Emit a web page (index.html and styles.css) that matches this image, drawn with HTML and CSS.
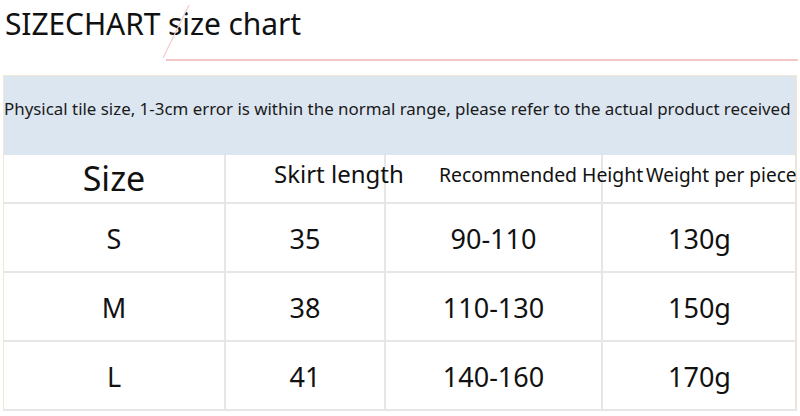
FILE: index.html
```html
<!DOCTYPE html>
<html>
<head>
<meta charset="utf-8">
<link rel="stylesheet" href="styles.css">
</head>
<body>
<div class="page">
  <header class="title-bar">
    <h1 class="title">SIZECHART size chart</h1>
    <svg class="deco" width="800" height="70" viewBox="0 0 800 70">
      <line x1="189" y1="5" x2="163" y2="58" stroke="#f3caca" stroke-width="1.2"/>
      <line x1="166" y1="60" x2="798" y2="60" stroke="#f3c6c6" stroke-width="2"/>
    </svg>
  </header>
  <div class="chart">
    <div class="note">Physical tile size, 1-3cm error is within the normal range, please refer to the actual product received</div>
    <div class="grid">
      <div class="cell head h-size">Size</div>
      <div class="cell head h-skirt">Skirt length</div>
      <div class="cell head h-rec">Recommended Height</div>
      <div class="cell head h-weight">Weight per piece</div>

      <div class="cell">S</div>
      <div class="cell">35</div>
      <div class="cell">90-110</div>
      <div class="cell">130g</div>

      <div class="cell">M</div>
      <div class="cell">38</div>
      <div class="cell">110-130</div>
      <div class="cell">150g</div>

      <div class="cell">L</div>
      <div class="cell">41</div>
      <div class="cell">140-160</div>
      <div class="cell">170g</div>
    </div>
  </div>
</div>
</body>
</html>
```

FILE: styles.css
```css
* { box-sizing: border-box; }
html, body { margin: 0; padding: 0; background: #fff; }
body {
  font-family: "Noto Sans", "Open Sans", sans-serif;
  color: #111;
  width: 800px;
  height: 416px;
  overflow: hidden;
}
.page { position: relative; }
.title-bar {
  position: relative;
  height: 75px;
}
.title {
  margin: 0;
  padding: 2px 0 0 5px;
  font-weight: 400;
  font-size: 30px;
  line-height: 44px;
  letter-spacing: -0.1px;
}
.deco {
  position: absolute;
  left: 0;
  top: 0;
  pointer-events: none;
}
.chart {
  margin-left: 3px;
  width: 794px;
  border-top: 1px solid #efe8d8;
  border-left: 1px solid #efe8d8;
  border-right: 2px solid #ece5d4;
}
.note {
  background: #dce6f1;
  height: 79px;
  display: flex;
  align-items: center;
  font-size: 16.9px;
  white-space: nowrap;
  padding-bottom: 14px;
  letter-spacing: 0;
  color: #1a1a1a;
}
.grid {
  display: grid;
  grid-template-columns: 222px 160px 217px 193px;
  grid-template-rows: 49px 69px 69px 69px;
}
.cell {
  display: flex;
  align-items: center;
  justify-content: center;
  font-size: 27px;
  border-right: 2px solid #e6e6e6;
  border-bottom: 2px solid #e6e6e6;
  white-space: nowrap;
  padding-top: 2px;
}
.cell:nth-child(4n) { border-right: none; }
.head { padding-top: 0; }
.h-size { font-size: 34px; padding-bottom: 2px; }
.h-skirt {
  font-size: 24px;
  justify-content: flex-start;
  padding-left: 48px;
  padding-bottom: 10px;
}
.h-rec {
  font-size: 19.4px;
  justify-content: flex-start;
  padding-left: 53px;
  padding-bottom: 8px;
}
.h-weight {
  font-size: 19px;
  justify-content: flex-start;
  padding-left: 43px;
  padding-bottom: 8px;
}
```
